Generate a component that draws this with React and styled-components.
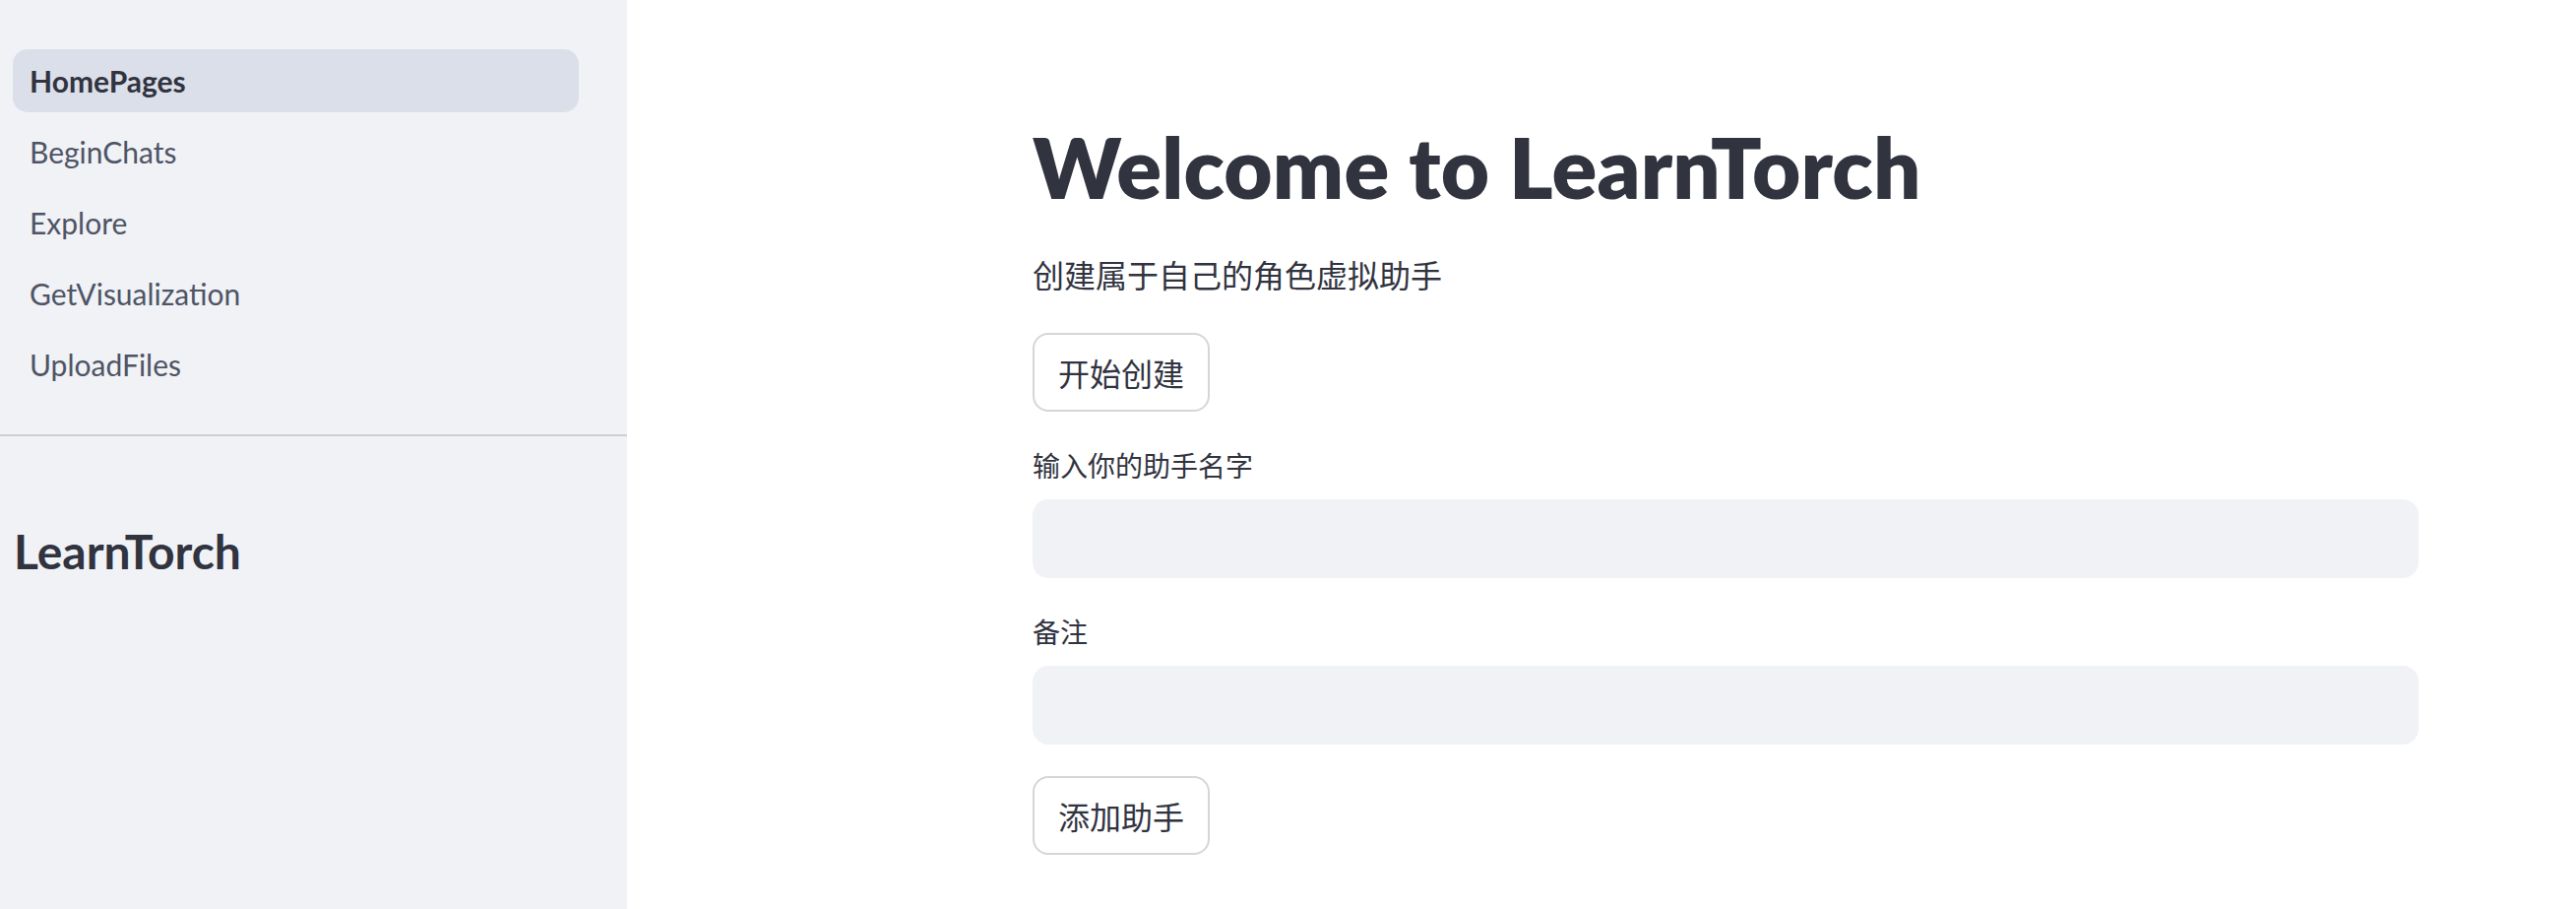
import styled, { createGlobalStyle } from "styled-components";

const GlobalStyle = createGlobalStyle`
  html, body {
    margin: 0;
    padding: 0;
    background: #ffffff;
  }
  body {
    font-family: Lato, "Noto Sans CJK SC", sans-serif;
    color: #31333f;
  }
  * {
    box-sizing: border-box;
  }`

const Page = styled.div`
  display: flex;
  width: 100%;
  min-height: 923px;`

const Sidebar = styled.aside`
  width: 637px;
  flex-shrink: 0;
  background: #f0f2f6;
  display: flex;
  flex-direction: column;`

const Nav = styled.nav`
  display: flex;
  flex-direction: column;
  gap: 8px;
  padding: 50px 49px 39px 13px;`

const NavItem = styled.a`
  display: flex;
  align-items: center;
  height: 64px;
  padding: 0 17px;
  border-radius: 15px;
  font-size: 30px;
  text-decoration: none;
  cursor: pointer;
  color: ${(p) => (p.active ? "#31333f" : "#4f5465")};
  font-weight: ${(p) => (p.active ? 700 : 400)};
  background: ${(p) => (p.active ? "#dadfe9" : "transparent")};`

const Divider = styled.hr`
  margin: 0;
  border: none;
  height: 2px;
  background: #cdcfd4;`

const SideTitle = styled.h3`
  margin: 88px 0 0 14px;
  font-size: 48px;
  line-height: 1.2;
  font-weight: 700;
  color: #31333f;`

const Main = styled.main`
  flex: 1;
  padding: 117px 0 0 412px;`

const Content = styled.div`
  width: 1408px;
  display: flex;
  flex-direction: column;
  align-items: flex-start;
  gap: 32px;`

const Title = styled.h1`
  margin: 0;
  font-size: 85px;
  line-height: 105px;
  letter-spacing: 0.2px;
  font-weight: 800;
  color: #31333f;`

const Text = styled.p`
  margin: 0;
  font-size: 32px;
  line-height: 52px;`

const Button = styled.button`
  height: 80px;
  padding: 0 24px;
  border: 2px solid #d6d6d9;
  border-radius: 16px;
  background: #ffffff;
  font-family: inherit;
  font-size: 32px;
  color: #31333f;
  cursor: pointer;`

const Field = styled.div`
  width: 100%;
  display: flex;
  flex-direction: column;`

const Label = styled.label`
  font-size: 28px;
  line-height: 46px;
  margin-bottom: 11px;`

const Input = styled.input`
  width: 100%;
  height: 80px;
  border: none;
  outline: none;
  border-radius: 16px;
  background: #f0f2f6;
  padding: 0 20px;
  font-family: inherit;
  font-size: 32px;
  color: #31333f;`

const pages = ["HomePages", "BeginChats", "Explore", "GetVisualization", "UploadFiles"];

export default function App() {
  return (
    <>
      <GlobalStyle />
      <Page>
        <Sidebar>
          <Nav>
            {pages.map((name, i) => (
              <NavItem key={name} active={i === 0}>
                {name}
              </NavItem>
            ))}
          </Nav>
          <Divider />
          <SideTitle>LearnTorch</SideTitle>
        </Sidebar>
        <Main>
          <Content>
            <Title>Welcome to LearnTorch</Title>
            <Text>创建属于自己的角色虚拟助手</Text>
            <Button>开始创建</Button>
            <Field>
              <Label>输入你的助手名字</Label>
              <Input />
            </Field>
            <Field>
              <Label>备注</Label>
              <Input />
            </Field>
            <Button>添加助手</Button>
          </Content>
        </Main>
      </Page>
    </>
  );
}
